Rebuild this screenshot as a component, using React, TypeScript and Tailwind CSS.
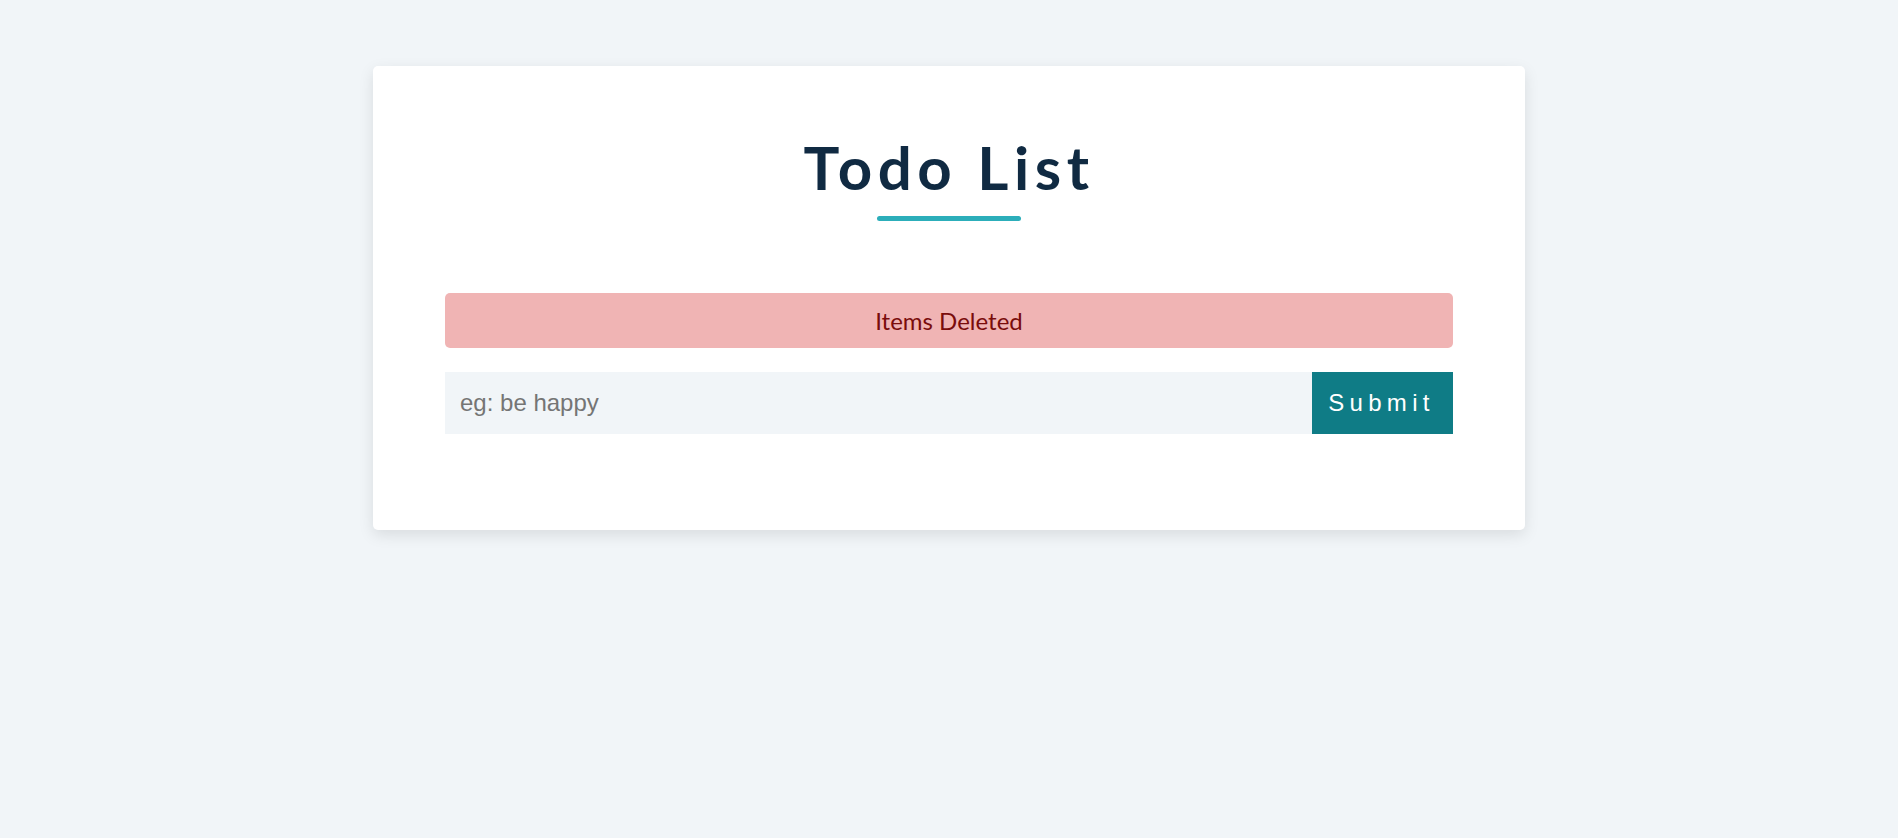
import { useState } from "react";

export default function App() {
  const [value, setValue] = useState("");

  return (
    <main className="min-h-screen bg-[#f1f5f8] pt-[66px]" style={{ fontFamily: "Lato, 'Noto Sans', sans-serif" }}>
      <section className="mx-auto w-[1152px] rounded-[5px] bg-white px-[72px] pt-[71px] pb-[96px] shadow-[0_5px_15px_rgba(0,0,0,0.1)]">
        <div className="flex flex-col items-center">
          <h1 className="text-[60px] font-bold leading-[60px] tracking-[5.5px] text-[#102a42]">Todo List</h1>
          <div className="mt-[19px] h-[5px] w-[144px] rounded-full bg-[#2caeba]" />
        </div>

        <div className="mt-[72px] flex h-[55px] items-center justify-center rounded-[5px] bg-[#f0b4b4] text-[24px] text-[#7a0c0c]">
          Items Deleted
        </div>

        <form
          className="mt-6 flex h-[62px]"
          onSubmit={(e) => {
            e.preventDefault();
            setValue("");
          }}
        >
          <input
            value={value}
            onChange={(e) => setValue(e.target.value)}
            placeholder="eg: be happy"
            className="min-w-0 flex-1 bg-[#f1f5f8] pl-[15px] text-[24px] text-[#102a42] outline-none placeholder:text-[#757575]"
            style={{ fontFamily: "'Liberation Sans', Arial, sans-serif" }}
          />
          <button
            type="submit"
            className="w-[141px] bg-[#0f7c86] text-[24px] tracking-[5.3px] text-white pr-[2px]"
            style={{ fontFamily: "'Liberation Sans', Arial, sans-serif" }}
          >
            Submit
          </button>
        </form>
      </section>
    </main>
  );
}
